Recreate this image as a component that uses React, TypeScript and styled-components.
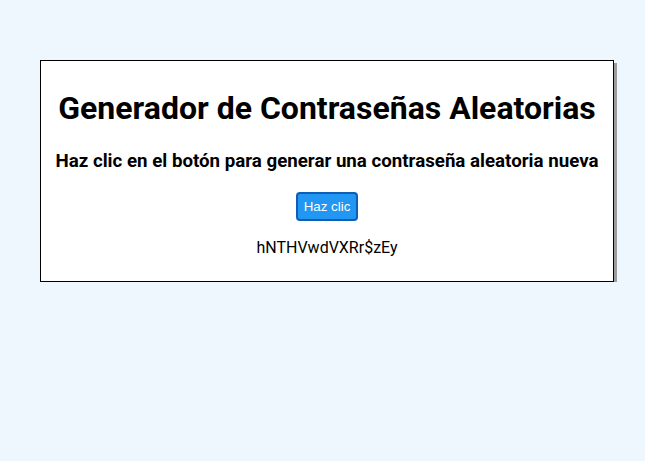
import styled, { createGlobalStyle } from 'styled-components';

const GlobalStyle = createGlobalStyle`
  html, body {
    margin: 0;
    padding: 0;
    background: #eef7fd;
    font-family: Roboto, "Liberation Sans", sans-serif;
  }
`;

const Page = styled.div`
  padding: 60px 31px 0 40px;
`;

const Card = styled.div`
  background: #fff;
  border: 1px solid #000;
  box-shadow: 3px 3px 0 #9d9d9d;
  display: flex;
  flex-direction: column;
  align-items: center;
  padding: 29px 8px 24px;
  text-align: center;
`;

const Title = styled.h1`
  margin: 0;
  font-size: 32px;
  font-weight: 700;
  line-height: 37px;
  color: #000;
  white-space: nowrap;
`;

const Subtitle = styled.h3`
  margin: 23px 0 0;
  font-size: 18.72px;
  font-weight: 700;
  line-height: 22px;
  color: #000;
  white-space: nowrap;
`;

const Button = styled.button`
  margin-top: 20px;
  height: 29px;
  padding: 0 6px;
  background: #2196f3;
  border: 2px solid #0d5fb5;
  border-radius: 4px;
  color: #fff;
  font-family: "Liberation Sans", Arial, sans-serif;
  font-size: 13.33px;
  cursor: pointer;
`;

const Password = styled.p`
  margin: 17px 0 0;
  font-size: 16px;
  line-height: 19px;
  color: #000;
`;

const App = () => {
  return (
    <>
      <GlobalStyle />
      <Page>
        <Card>
          <Title>Generador de Contraseñas Aleatorias</Title>
          <Subtitle>Haz clic en el botón para generar una contraseña aleatoria nueva</Subtitle>
          <Button>Haz clic</Button>
          <Password>hNTHVwdVXRr$zEy</Password>
        </Card>
      </Page>
    </>
  );
};

export default App;
